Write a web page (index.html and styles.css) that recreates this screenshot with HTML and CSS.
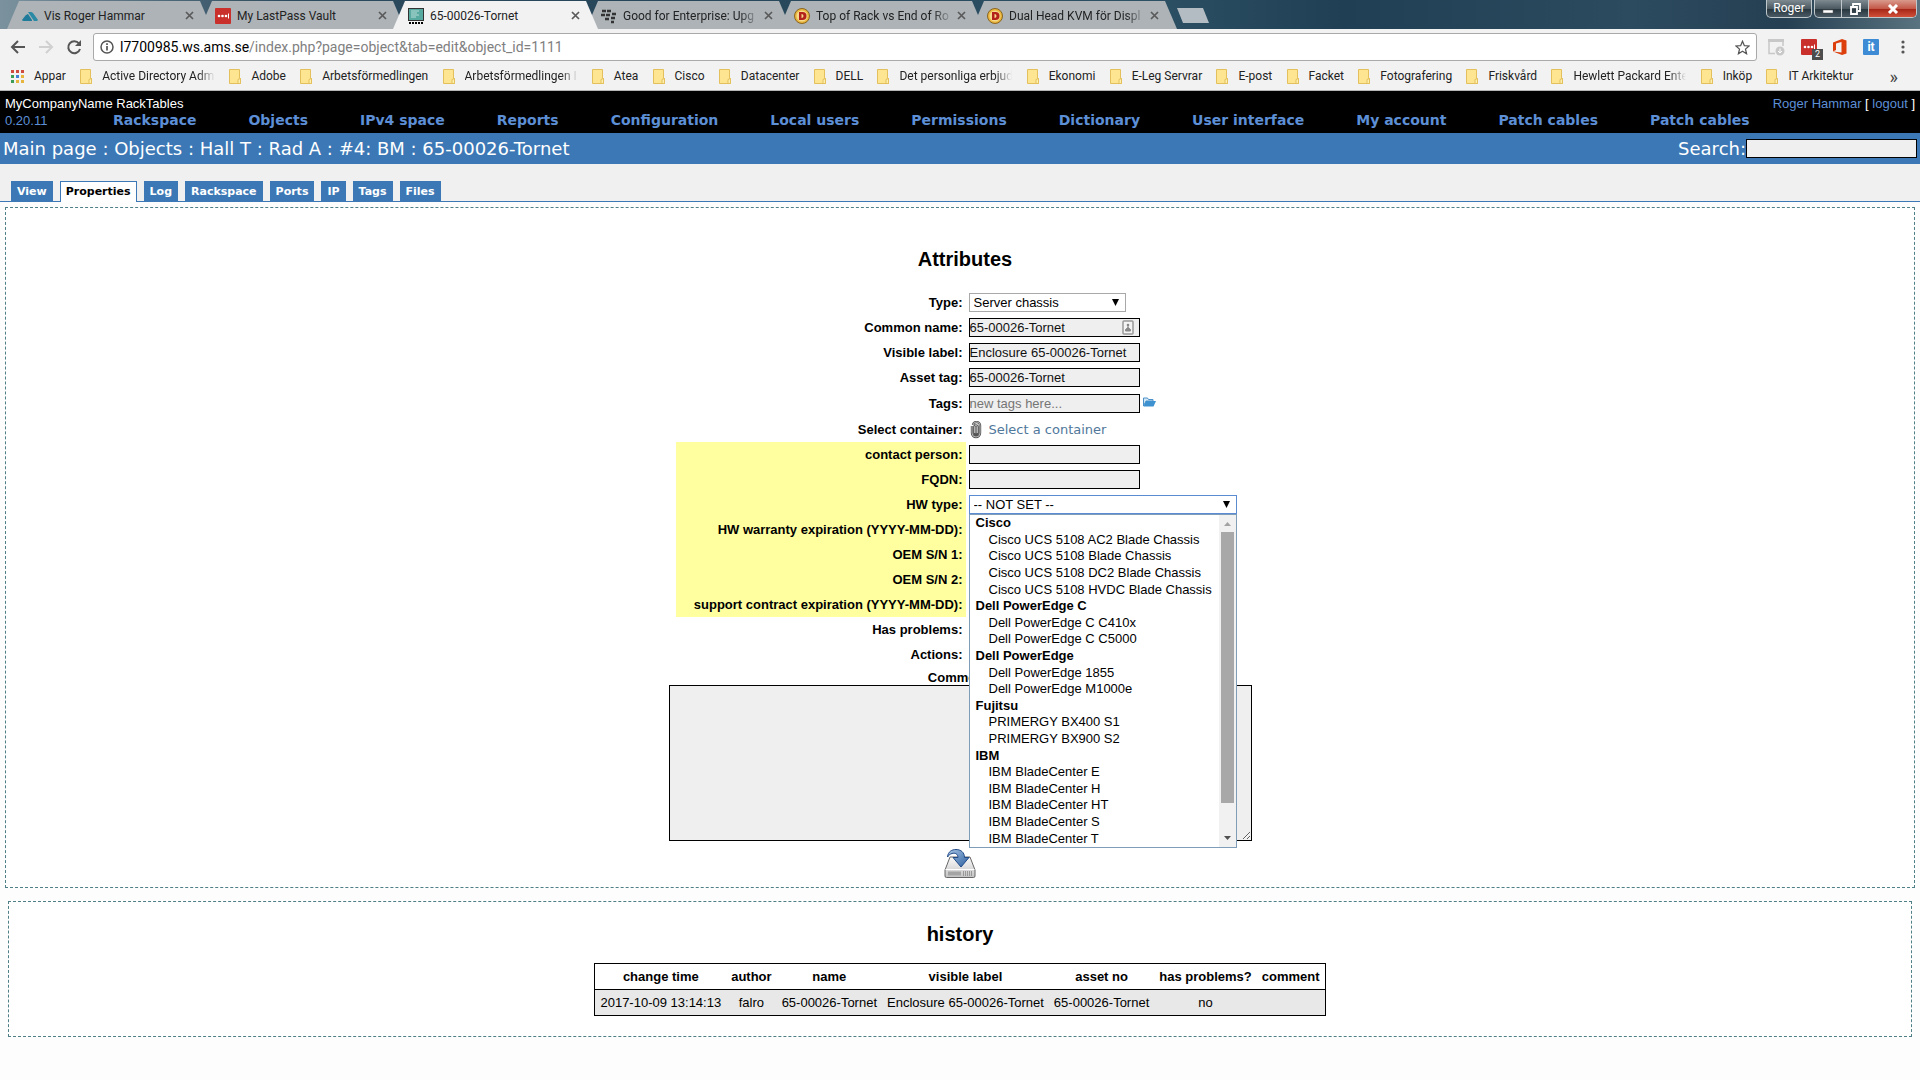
FILE: index.html
```html
<!DOCTYPE html>
<html lang="en">
<head>
  <meta charset="UTF-8" />
  <title>65-00026-Tornet</title>
  <link rel="stylesheet" href="styles.css">
</head>
<body>
  <svg class="defs" aria-hidden="true">
    <defs>
      <symbol id="folder" viewBox="0 0 12 15">
        <path d="M0.500 0.500h10v9h1v5h-11z" fill="#fee591" stroke="#e3c05c"/>
        <path d="M9 10.500l2.500 -1v5h-2.500z" fill="#fff0b0" stroke="#e3c05c"/>
      </symbol>
      <symbol id="close" viewBox="0 0 9 9">
        <path d="M1 1l7 7M8 1l-7 7" stroke="#5a5a5a" stroke-width="1.700"/>
      </symbol>
      <symbol id="lastpass" viewBox="0 0 16 16">
        <rect width="16" height="16" rx="1" fill="#c9302c"/>
        <circle cx="4" cy="8" r="1.300" fill="#fff"/><circle cx="7.500" cy="8" r="1.300" fill="#fff"/><circle cx="11" cy="8" r="1.300" fill="#fff"/>
        <path d="M13.500 5.500v5" stroke="#fff"/>
      </symbol>
      <symbol id="dustin" viewBox="0 0 16 16">
        <circle cx="8" cy="8" r="7.500" fill="#e9b63c" stroke="#8a6420"/>
        <circle cx="8" cy="8" r="5.500" fill="#f6d98a"/>
        <path d="M5 4h3.500a4 4 0 0 1 0 8H5z" fill="#b3221b"/>
        <path d="M7.500 6v4a2 2 0 0 0 0 -4z" fill="#f6d98a"/>
      </symbol>
    </defs>
  </svg>

  <header class="browser">
    <div class="tabstrip">
      <div class="tab"><svg width="16" height="16" viewBox="0 0 16 16"><path d="M0 12Q4 6 6 6l4 6v1H2q-2 0-2-1z" fill="#1f7b99"/><path d="M6 4h3q1 0 2 1l5 7-1 1h-3z" fill="#2a8aa5"/></svg><span>Vis Roger Hammar</span><button aria-label="Close"><svg width="9" height="9"><use href="#close"/></svg></button></div>
      <div class="tab"><svg width="16" height="16"><use href="#lastpass"/></svg><span>My LastPass Vault</span><button aria-label="Close"><svg width="9" height="9"><use href="#close"/></svg></button></div>
      <div class="tab current"><svg width="16" height="16" viewBox="0 0 16 16"><rect x="0.500" y="0.500" width="15" height="12" fill="#58a9a0" stroke="#333"/><path d="M3 3h8M3 5h6M3 7h8M3 9h5" stroke="#b7ddd8"/><path d="M1 15h14" stroke="#000" stroke-width="2" stroke-dasharray="2 1"/></svg><span>65-00026-Tornet</span><button aria-label="Close"><svg width="9" height="9"><use href="#close"/></svg></button></div>
      <div class="tab"><svg width="16" height="16" viewBox="0 0 16 16"><path d="M1 3h4M6 3h4M0 7h4M5 7h4M11 6h4M10 10h4M4 11h4M10 14h3" stroke="#333" stroke-width="2.500"/></svg><span class="faded">Good for Enterprise: Upg</span><button aria-label="Close"><svg width="9" height="9"><use href="#close"/></svg></button></div>
      <div class="tab"><svg width="16" height="16"><use href="#dustin"/></svg><span class="faded">Top of Rack vs End of Ro</span><button aria-label="Close"><svg width="9" height="9"><use href="#close"/></svg></button></div>
      <div class="tab"><svg width="16" height="16"><use href="#dustin"/></svg><span class="faded">Dual Head KVM för Displ</span><button aria-label="Close"><svg width="9" height="9"><use href="#close"/></svg></button></div>
      <button class="newtab" aria-label="New tab"></button>
      <div class="window-buttons">
        <button class="user">Roger</button>
        <div class="winset">
          <button aria-label="Minimize"><svg width="12" height="12" viewBox="0 0 12 12"><path d="M1 7h10v3H1z" fill="#fff" stroke="#555" stroke-width="0.500"/></svg></button>
          <button aria-label="Restore"><svg width="12" height="12" viewBox="0 0 12 12"><path d="M4 3V1h7v7H9M2 4h6v7H2z" fill="none" stroke="#fff" stroke-width="1.800"/></svg></button>
          <button class="quit" aria-label="Quit"><svg width="12" height="10" viewBox="0 0 12 10"><path d="M2 1l8 8M10 1l-8 8" stroke="#fff" stroke-width="3"/></svg></button>
        </div>
      </div>
    </div>

    <div class="toolbar">
      <button aria-label="Back"><svg width="16" height="16" viewBox="0 0 16 16"><path d="M15 8H2M8 2L2 8l6 6" fill="none" stroke="#555" stroke-width="2"/></svg></button>
      <button aria-label="Forward"><svg width="16" height="16" viewBox="0 0 16 16"><path d="M1 8h13M8 2l6 6-6 6" fill="none" stroke="#d0d0d0" stroke-width="2"/></svg></button>
      <button aria-label="Reload"><svg width="16" height="16" viewBox="0 0 16 16"><path d="M13 4.500A6 6 0 1 0 14 10" fill="none" stroke="#555" stroke-width="2"/><path d="M15 1v6H9z" fill="#555"/></svg></button>
      <div class="omnibox">
        <svg width="14" height="14" viewBox="0 0 14 14"><circle cx="7" cy="7" r="6" fill="none" stroke="#555" stroke-width="1.500"/><path d="M7 6v4.500M7 3.300v1.700" stroke="#555" stroke-width="1.700"/></svg>
        <span class="url"><b>l7700985.ws.ams.se</b>/index.php?page=object&amp;tab=edit&amp;object_id=1111</span>
        <svg width="15" height="15" viewBox="0 0 24 24"><path d="M12 2l3 7 7.500.600-5.700 5 1.700 7.400-6.500-4-6.500 4 1.700-7.400-5.700-5L9 9z" fill="none" stroke="#555" stroke-width="2"/></svg>
      </div>
      <div class="extensions">
        <svg width="17" height="17" viewBox="0 0 17 17"><path d="M7 14.500H1V1h14v6" fill="none" stroke="#c8c8c8" stroke-width="1.500"/><path d="M0 0h16v3H0z" fill="#c8c8c8"/><circle cx="12" cy="12" r="4.500" fill="#c8c8c8"/><path d="M12 9.500v4M10 12l2 2 2-2" fill="none" stroke="#fff"/></svg>
        <span class="badged"><svg width="16" height="16"><use href="#lastpass"/></svg><i>2</i></span>
        <svg width="14" height="16" viewBox="0 0 14 16"><path d="M0 3.500L9 0l4.500 1.500v13L9 16l-9-3.500 8.500 1V3L3 4.500v6.500l-3 1.500z" fill="#dc3e0c"/></svg>
        <span class="it">it</span>
        <button class="menu" aria-label="Menu"><svg width="4" height="14" viewBox="0 0 4 14"><circle cx="2" cy="2" r="1.600" fill="#555"/><circle cx="2" cy="7" r="1.600" fill="#555"/><circle cx="2" cy="12" r="1.600" fill="#555"/></svg></button>
      </div>
    </div>

    <nav class="bookmarks">
      <a href="#"><svg width="13" height="13" viewBox="0 0 13 13"><path d="M0 1.500h3m2 0h3m2 0h3" stroke="#cf4b3f" stroke-width="3"/><path d="M0 6.500h3" stroke="#3b9c56" stroke-width="3"/><path d="M5 6.500h3" stroke="#3f7fd6" stroke-width="3"/><path d="M10 6.500h3M5 11.500h3m2 0h3" stroke="#e8b53c" stroke-width="3"/><path d="M0 11.500h3" stroke="#3b9c56" stroke-width="3"/></svg><span>Appar</span></a>
      <a href="#"><svg width="12" height="15"><use href="#folder"/></svg><span class="cut faded">Active Directory Adm</span></a>
      <a href="#"><svg width="12" height="15"><use href="#folder"/></svg><span>Adobe</span></a>
      <a href="#"><svg width="12" height="15"><use href="#folder"/></svg><span>Arbetsförmedlingen</span></a>
      <a href="#"><svg width="12" height="15"><use href="#folder"/></svg><span class="cut faded">Arbetsförmedlingen I</span></a>
      <a href="#"><svg width="12" height="15"><use href="#folder"/></svg><span>Atea</span></a>
      <a href="#"><svg width="12" height="15"><use href="#folder"/></svg><span>Cisco</span></a>
      <a href="#"><svg width="12" height="15"><use href="#folder"/></svg><span>Datacenter</span></a>
      <a href="#"><svg width="12" height="15"><use href="#folder"/></svg><span>DELL</span></a>
      <a href="#"><svg width="12" height="15"><use href="#folder"/></svg><span class="cut faded">Det personliga erbjud</span></a>
      <a href="#"><svg width="12" height="15"><use href="#folder"/></svg><span>Ekonomi</span></a>
      <a href="#"><svg width="12" height="15"><use href="#folder"/></svg><span>E-Leg Servrar</span></a>
      <a href="#"><svg width="12" height="15"><use href="#folder"/></svg><span>E-post</span></a>
      <a href="#"><svg width="12" height="15"><use href="#folder"/></svg><span>Facket</span></a>
      <a href="#"><svg width="12" height="15"><use href="#folder"/></svg><span>Fotografering</span></a>
      <a href="#"><svg width="12" height="15"><use href="#folder"/></svg><span>Friskvård</span></a>
      <a href="#"><svg width="12" height="15"><use href="#folder"/></svg><span class="cut faded">Hewlett Packard Ente</span></a>
      <a href="#"><svg width="12" height="15"><use href="#folder"/></svg><span>Inköp</span></a>
      <a href="#"><svg width="12" height="15"><use href="#folder"/></svg><span>IT Arkitektur</span></a>
      <button class="more">»</button>
    </nav>
  </header>

  <div class="mainheader">
    <div class="banner">
      <div>MyCompanyName RackTables<br><a href="#">0.20.11</a></div>
      <div><a href="#">Roger Hammar</a> [ <a href="#">logout</a> ]</div>
    </div>
    <nav class="menubar">
      <a href="#">Rackspace</a>
      <a href="#">Objects</a>
      <a href="#">IPv4 space</a>
      <a href="#">Reports</a>
      <a href="#">Configuration</a>
      <a href="#">Local users</a>
      <a href="#">Permissions</a>
      <a href="#">Dictionary</a>
      <a href="#">User interface</a>
      <a href="#">My account</a>
      <a href="#">Patch cables</a>
      <a href="#">Patch cables</a>
    </nav>
  </div>

  <div class="pathbar">
    <div><a href="#">Main page</a> : <a href="#">Objects</a> : <a href="#">Hall T</a> : <a href="#">Rad A</a> : <a href="#">#4: BM</a> : <a href="#">65-00026-Tornet</a></div>
    <form class="search"><label for="q">Search:</label><input type="text" id="q"></form>
  </div>

  <nav class="tabs">
    <a href="#">View</a>
    <a href="#" class="activetab">Properties</a>
    <a href="#">Log</a>
    <a href="#">Rackspace</a>
    <a href="#">Ports</a>
    <a href="#">IP</a>
    <a href="#">Tags</a>
    <a href="#">Files</a>
  </nav>

  <main>
    <section class="portlet">
      <h2 class="attributes">Attributes</h2>
      <form>
        <div class="fields">
          <div class="row"><label for="type">Type:</label><select id="type"><option>Server chassis</option></select></div>
          <div class="row"><label for="name">Common name:</label><div class="field"><input type="text" id="name" value="65-00026-Tornet"><svg class="fill-icon" width="12" height="15" viewBox="0 0 12 15"><rect x="1" y="1" width="10" height="13" rx="1" fill="#f4f4f4" stroke="#999" stroke-width="1.500"/><circle cx="6" cy="5" r="1.300" fill="#888"/><path d="M6 5v4M3.500 11v-1.500l2.500-2 2.500 2V11z" fill="#888" stroke="#888"/></svg></div></div>
          <div class="row"><label for="label">Visible label:</label><input type="text" id="label" value="Enclosure 65-00026-Tornet"></div>
          <div class="row"><label for="asset">Asset tag:</label><input type="text" id="asset" value="65-00026-Tornet"></div>
          <div class="row tall"><label for="tags">Tags:</label><input type="text" id="tags" placeholder="new tags here..."><a href="#" class="tree" aria-label="Tag tree"><svg width="13" height="10" viewBox="0 0 13 10"><path d="M0.500 9V1h4l1 1.500H10V4H3z" fill="#d4e9f8" stroke="#4a90c8"/><path d="M3 4h10l-2.500 5.500H0.500z" fill="#3f92d0"/></svg></a></div>
          <div class="row"><span class="name">Select container:</span><a href="#" class="container-link"><svg width="13" height="18" viewBox="0 0 13 18"><path d="M3 5v7a4 4 0 0 0 8 0V5a3.500 3.500 0 0 0-7-1M5.500 12V6a1.500 1.500 0 0 1 3 0v6a1.500 1.500 0 0 1-3 0" fill="none" stroke="#555" stroke-width="2.400"/><path d="M3 5v7a4 4 0 0 0 8 0V5a3.500 3.500 0 0 0-7-1M5.500 12V6a1.500 1.500 0 0 1 3 0v6" fill="none" stroke="#ccc" stroke-width="0.800"/></svg>Select a container</a></div>
          <div class="row opt"><label for="contact">contact person:</label><input type="text" id="contact"></div>
          <div class="row opt"><label for="fqdn">FQDN:</label><input type="text" id="fqdn"></div>
          <div class="row opt"><label for="hwtype">HW type:</label>
            <div class="field hw">
              <select id="hwtype"><option>-- NOT SET --</option></select>
              <div class="dropdown">
                <ul role="listbox" aria-label="HW type">
                  <li class="group">Cisco</li>
                  <li>Cisco UCS 5108 AC2 Blade Chassis</li>
                  <li>Cisco UCS 5108 Blade Chassis</li>
                  <li>Cisco UCS 5108 DC2 Blade Chassis</li>
                  <li>Cisco UCS 5108 HVDC Blade Chassis</li>
                  <li class="group">Dell PowerEdge C</li>
                  <li>Dell PowerEdge C C410x</li>
                  <li>Dell PowerEdge C C5000</li>
                  <li class="group">Dell PowerEdge</li>
                  <li>Dell PowerEdge 1855</li>
                  <li>Dell PowerEdge M1000e</li>
                  <li class="group">Fujitsu</li>
                  <li>PRIMERGY BX400 S1</li>
                  <li>PRIMERGY BX900 S2</li>
                  <li class="group">IBM</li>
                  <li>IBM BladeCenter E</li>
                  <li>IBM BladeCenter H</li>
                  <li>IBM BladeCenter HT</li>
                  <li>IBM BladeCenter S</li>
                  <li>IBM BladeCenter T</li>
                </ul>
                <div class="scrollbar">
                  <svg width="7" height="4" viewBox="0 0 7 4"><path d="M0 4L3.500 0 7 4z" fill="#a3a3a3"/></svg>
                  <div class="thumb"></div>
                  <svg width="7" height="4" viewBox="0 0 7 4"><path d="M0 0l3.500 4L7 0z" fill="#505050"/></svg>
                </div>
              </div>
            </div>
          </div>
          <div class="row opt"><span class="name">HW warranty expiration (YYYY-MM-DD):</span></div>
          <div class="row opt"><span class="name">OEM S/N 1:</span></div>
          <div class="row opt"><span class="name">OEM S/N 2:</span></div>
          <div class="row opt"><span class="name">support contract expiration (YYYY-MM-DD):</span></div>
          <div class="row"><span class="name">Has problems:</span></div>
          <div class="row"><span class="name">Actions:</span></div>
        </div>
        <div class="comment">
          <label for="comment">Comment:</label>
          <textarea id="comment"></textarea>
          <button class="save" aria-label="Save changes">
            <svg width="32" height="32" viewBox="0 0 32 32">
              <defs>
                <linearGradient id="metal" x2="0" y2="1"><stop offset="0" stop-color="#fafafa"/><stop offset="1" stop-color="#c4c4c4"/></linearGradient>
                <linearGradient id="arrow" x2="1" y2="1"><stop offset="0" stop-color="#a9c5e6"/><stop offset="1" stop-color="#2a5f9f"/></linearGradient>
              </defs>
              <path d="M6 9h20l5 13v6q0 1.500-1.500 1.500h-27Q1 29.500 1 28v-6z" fill="url(#metal)" stroke="#666"/>
              <path d="M1.500 21.500h29" stroke="#fff"/>
              <path d="M4 23.500h13v4H4z" fill="#a4a4a4"/>
              <path d="M19.500 23v5m2-5v5m2-5v5m2-5v5m2-5v5" stroke="#999"/>
              <path d="M3.500 9C4 3.500 8 1.500 12 1.500c5 0 8.500 3 8.500 8H25l-8 9.500-8-9.500h5C14 6 11 4.500 8 5.500 6 6 4.500 7.500 3.500 9z" fill="url(#arrow)" stroke="#204a87"/>
            </svg>
          </button>
        </div>
      </form>
    </section>

    <section class="portlet history">
      <h2>history</h2>
      <table>
        <thead>
          <tr><th>change time</th><th>author</th><th>name</th><th>visible label</th><th>asset no</th><th>has problems?</th><th>comment</th></tr>
        </thead>
        <tbody>
          <tr><td>2017-10-09 13:14:13</td><td>falro</td><td>65-00026-Tornet</td><td>Enclosure 65-00026-Tornet</td><td>65-00026-Tornet</td><td>no</td><td></td></tr>
        </tbody>
      </table>
    </section>
  </main>
</body>
</html>
```

FILE: styles.css
```css
* {
  box-sizing: border-box;
}
body {
  margin: 0;
  background-color: #fdfdfd;
  font-family: "Liberation Sans", Arial, sans-serif;
  font-size: 13px;
  color: #000;
}
a {
  color: #5d8fd6;
  text-decoration: none;
}
button {
  padding: 0;
  border: none;
  background: none;
  font: inherit;
}
svg {
  display: block;
  flex: none;
}
.defs {
  position: absolute;
  width: 0;
  height: 0;
}

/* browser window */
.browser {
  background-color: #f2f2f2;
  border-bottom: 1px solid #b6b4b6;
  font-family: Roboto, "Noto Sans", sans-serif;
  font-size: 12px;
}
.tabstrip {
  display: flex;
  height: 29px;
  padding-left: 7px;
  background: linear-gradient(90deg, #7b929e, #2c4a5e 15%, #27465a 35%, #2c5064 60%, #203f54 70%, #2c4b5f 85%, #263f52 93%, #5a7380);
}
.tab {
  display: flex;
  align-items: center;
  width: 205px;
  margin-right: -12px;
  padding: 2px 18px 0 15px;
  background-color: #adb3b7;
  clip-path: polygon(12px 1px, 193px 1px, 205px 100%, 0 100%);
  color: #222;
}
.tab.current {
  z-index: 1;
  background-color: #f2f2f2;
}
.tab span {
  flex: 1;
  margin: 0 4px 0 6px;
  white-space: nowrap;
}
.faded {
  -webkit-mask-image: linear-gradient(90deg, #000 85%, transparent);
}
.newtab {
  width: 32px;
  height: 15px;
  margin: 8px 0 0 12px;
  background-color: #b3bcc2;
  clip-path: polygon(0 0, 26px 0, 100% 100%, 6px 100%);
}
.window-buttons {
  display: flex;
  gap: 2px;
  height: 18px;
  margin-left: auto;
  padding-right: 3px;
  color: #fff;
}
.user, .winset {
  border: 1px solid #c0c8cc;
  border-top: none;
  border-radius: 0 0 5px 5px;
  background: linear-gradient(#7e8a90, #4d5a62 50%, #26343c 51%, #4a5a64);
}
.user {
  width: 46px;
  color: #fff;
  line-height: 17px;
}
.winset {
  display: flex;
  overflow: hidden;
}
.winset button {
  display: flex;
  align-items: center;
  justify-content: center;
  width: 27px;
  border-right: 1px solid #c0c8cc;
}
.winset .quit {
  width: 47px;
  border: none;
  background: linear-gradient(#d99a8c, #c4594a 50%, #a32414 51%, #d0503a);
}
.toolbar {
  display: flex;
  align-items: center;
  height: 34px;
  padding: 4px 15px 2px 10px;
  gap: 12px;
}
.omnibox {
  display: flex;
  align-items: center;
  flex: 1;
  height: 28px;
  margin: 0 -1px;
  padding: 0 6px;
  border: 1px solid #a9a9a9;
  border-radius: 3px;
  background-color: #fff;
}
.url {
  flex: 1;
  margin-left: 6px;
  font-size: 14px;
  color: #808080;
}
.url b {
  font-weight: normal;
  color: #000;
}
.extensions {
  display: flex;
  align-items: center;
  gap: 16px;
}
.menu {
  margin-left: 6px;
}
.badged {
  position: relative;
}
.badged i {
  position: absolute;
  left: 11px;
  top: 10px;
  width: 11px;
  height: 11px;
  background-color: #4d4d4d;
  color: #fff;
  font-size: 9px;
  font-style: normal;
  line-height: 11px;
  text-align: center;
}
.it {
  width: 16px;
  height: 16px;
  border-radius: 1px;
  background-color: #3d8bd4;
  color: #fff;
  font-weight: bold;
  line-height: 16px;
  text-align: center;
}
.bookmarks {
  display: flex;
  align-items: center;
  justify-content: space-between;
  height: 27px;
  padding: 0 22px 1px 11px;
  white-space: nowrap;
}
.bookmarks a {
  display: flex;
  align-items: center;
  gap: 10px;
  color: #222;
}
.cut {
  width: 113px;
}
.more {
  margin-left: 22px;
  color: #444;
  font-size: 18px;
}

/* page header */
.mainheader {
  height: 42px;
  background-color: #000;
}
.banner {
  display: flex;
  justify-content: space-between;
  height: 22px;
  padding: 4px 5px 0;
  line-height: 17px;
  color: #fff;
}
.menubar {
  display: flex;
  gap: 52px;
  padding-left: 113px;
  font: bold 14px/14px "DejaVu Sans", Verdana, sans-serif;
}
.pathbar {
  display: flex;
  align-items: center;
  justify-content: space-between;
  height: 31px;
  padding: 0 3px;
  background-color: #3c78b5;
  color: #fff;
  font: 18px/28px "DejaVu Sans", Verdana, sans-serif;
}
.pathbar a {
  color: #fff;
}
.search {
  display: flex;
  align-items: center;
}
input {
  width: 171px;
  height: 19px;
  padding: 0;
  border: 1px solid #000;
  background-color: #efefef;
  color: #111;
  font: 13px "Liberation Sans", Arial, sans-serif;
}
.tabs {
  display: flex;
  align-items: flex-end;
  gap: 7px;
  height: 38px;
  padding-left: 11px;
  border-bottom: 1px solid #3c78b5;
  background-color: #f0f0f0;
  font: bold 11px/22px "DejaVu Sans", Verdana, sans-serif;
}
.tabs a {
  height: 20px;
  padding: 0 6px;
  background-color: #3c78b5;
  color: #fff;
}
.tabs .activetab {
  height: 21px;
  margin-bottom: -1px;
  padding: 0 5px;
  border: 1px solid #3c78b5;
  border-bottom: none;
  background-color: #fff;
  color: #000;
  line-height: 20px;
}

/* content */
.portlet {
  margin: 5px 5px 0;
  padding: 39px 0 7px;
  border: 1px dashed #4f7f87;
  background-color: #fff;
}
.portlet h2 {
  margin: 0;
  font-size: 20px;
  line-height: 24px;
  text-align: center;
}
.portlet .attributes {
  margin-bottom: 19px;
  padding-left: 10px;
}
.fields {
  width: 569px;
  margin: 0 auto;
}
.row {
  display: flex;
  align-items: center;
  gap: 3px;
  height: 25px;
}
.row.tall {
  height: 27px;
}
.row > label, .row > .name {
  width: 290px;
  padding-right: 3px;
  font-size: 13px;
  font-weight: bold;
  line-height: 25px;
  text-align: right;
  white-space: nowrap;
}
.row.opt > label, .row.opt > .name {
  background-color: #ffffa0;
}
.field {
  position: relative;
}
.field input {
  display: block;
}
.fill-icon {
  position: absolute;
  right: 6px;
  top: 2px;
}
.tree {
  padding-bottom: 4px;
}
select {
  width: 157px;
  height: 19px;
  padding: 0 0 0 4px;
  border: 1px solid #a9a9a9;
  appearance: none;
  background: #fff url("data:image/svg+xml,%3Csvg xmlns='http://www.w3.org/2000/svg' width='7' height='7'%3E%3Cpath d='M0 0h7L3.500 7z'/%3E%3C/svg%3E") no-repeat right 6px center;
  color: #000;
  font: 13px "Liberation Sans", Arial, sans-serif;
}
.container-link {
  display: flex;
  align-items: center;
  gap: 7px;
  color: #50789b;
  font: 13px/22px "DejaVu Sans", Verdana, sans-serif;
}
.hw select {
  display: block;
  width: 268px;
  border-color: #5b8bd0;
}
.dropdown {
  position: absolute;
  left: 0;
  top: 19px;
  z-index: 1;
  display: flex;
  width: 268px;
  height: 334px;
  border: 1px solid #7f9db9;
  background-color: #fff;
}
.dropdown ul {
  flex: 1;
  display: grid;
  grid-template-rows: repeat(20, 1fr);
  align-items: center;
  margin: 0;
  padding: 0 0 0 6px;
  list-style: none;
  line-height: 16px;
  white-space: nowrap;
}
.dropdown li {
  padding-left: 13px;
}
.dropdown .group {
  padding-left: 0;
  font-weight: bold;
}
.scrollbar {
  display: flex;
  flex-direction: column;
  align-items: center;
  justify-content: space-between;
  width: 17px;
  padding: 7px 0;
  background-color: #f1f1f1;
}
.thumb {
  width: 13px;
  height: 271px;
  margin-bottom: 27px;
  background-color: #a8a8a8;
}
.comment {
  display: flex;
  flex-direction: column;
  align-items: center;
}
.comment label {
  height: 18px;
  font-weight: bold;
  line-height: 22px;
}
textarea {
  width: 583px;
  height: 156px;
  border: 1px solid #000;
  background-color: #efefef;
}
.save {
  margin-top: 7px;
}

/* history */
.history {
  margin: 13px 8px 0;
  padding: 20px 0;
}
.history table {
  margin: 17px auto 0;
  border: 1px solid #000;
  border-collapse: collapse;
}
.history th, .history td {
  height: 26px;
  padding: 0 5px;
  text-align: center;
  white-space: nowrap;
}
.history td {
  border-top: 1px solid #000;
  background-color: #e8e8e8;
}
```
